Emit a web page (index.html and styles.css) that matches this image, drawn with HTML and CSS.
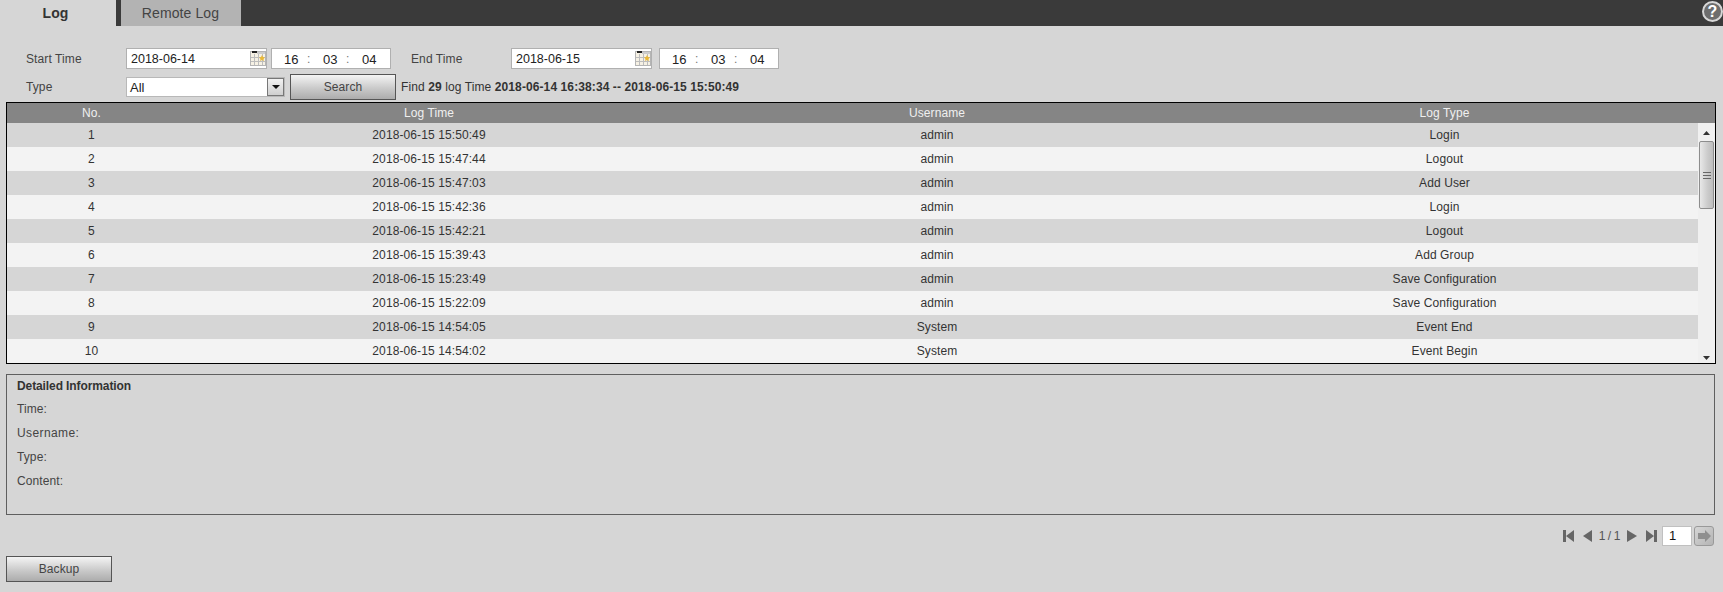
FILE: index.html
```html
<!DOCTYPE html>
<html lang="en">
<head>
<meta charset="utf-8">
<title>Log</title>
<link rel="stylesheet" href="styles.css">
</head>
<body>
<svg class="defs" width="0" height="0" aria-hidden="true">
  <symbol id="cal" viewBox="0 0 16 15">
    <rect x="0.5" y="0.5" width="15" height="14" fill="#f6f1e4" stroke="#b5b5b5"/>
    <rect x="2" y="0" width="5" height="2" fill="#222"/>
    <rect x="7" y="1" width="8" height="2" fill="#ccc"/>
    <path d="M1 6.5h14M1 10.5h14M4.5 3v11M8.5 3v11M12.5 3v11" stroke="#bdbdbd" fill="none"/>
    <path d="M12 4l1 2 2 .5-1.5 1.5.5 2-2-1-2 1 .5-2L9 6.5l2-.5z" fill="#e9b93a"/>
  </symbol>
</svg>
<header class="tabs">
  <div class="tab tab-active">Log</div>
  <div class="tab tab-other">Remote Log</div>
  <div class="help"><span>?</span></div>
</header>
<main class="page">
  <section class="filters">
    <div class="frow">
      <label class="lbl">Start Time</label>
      <div class="date"><span class="dtext">2018-06-14</span><svg class="calicon"><use href="#cal"/></svg></div>
      <div class="time"><span>16</span><i>:</i><span>03</span><i>:</i><span>04</span></div>
      <label class="lbl lbl-end">End Time</label>
      <div class="date"><span class="dtext">2018-06-15</span><svg class="calicon"><use href="#cal"/></svg></div>
      <div class="time time-end"><span>16</span><i>:</i><span>03</span><i>:</i><span>04</span></div>
    </div>
    <div class="frow frow2">
      <label class="lbl">Type</label>
      <div class="select">All<span class="selbtn"><b></b></span></div>
      <button class="btn btn-search">Search</button>
      <div class="find">Find <b>29</b> log Time <b>2018-06-14 16:38:34 -- 2018-06-15 15:50:49</b></div>
    </div>
  </section>
  <section class="table">
    <div class="thead">
      <div>No.</div><div>Log Time</div><div>Username</div><div>Log Type</div>
    </div>
    <div class="tbody">
      <div class="rows">
        <div class="row"><div>1</div><div>2018-06-15 15:50:49</div><div>admin</div><div>Login</div></div>
        <div class="row"><div>2</div><div>2018-06-15 15:47:44</div><div>admin</div><div>Logout</div></div>
        <div class="row"><div>3</div><div>2018-06-15 15:47:03</div><div>admin</div><div>Add User</div></div>
        <div class="row"><div>4</div><div>2018-06-15 15:42:36</div><div>admin</div><div>Login</div></div>
        <div class="row"><div>5</div><div>2018-06-15 15:42:21</div><div>admin</div><div>Logout</div></div>
        <div class="row"><div>6</div><div>2018-06-15 15:39:43</div><div>admin</div><div>Add Group</div></div>
        <div class="row"><div>7</div><div>2018-06-15 15:23:49</div><div>admin</div><div>Save Configuration</div></div>
        <div class="row"><div>8</div><div>2018-06-15 15:22:09</div><div>admin</div><div>Save Configuration</div></div>
        <div class="row"><div>9</div><div>2018-06-15 14:54:05</div><div>System</div><div>Event End</div></div>
        <div class="row"><div>10</div><div>2018-06-15 14:54:02</div><div>System</div><div>Event Begin</div></div>
      </div>
      <div class="scroll">
        <svg class="arrow" width="7" height="4" viewBox="0 0 7 4"><path d="M3.5 0L7 4H0z" fill="#333"/></svg>
        <div class="thumb"><span></span><span></span><span></span></div>
        <svg class="arrow arrow-down" width="7" height="4" viewBox="0 0 7 4"><path d="M0 0H7L3.5 4z" fill="#333"/></svg>
      </div>
    </div>
  </section>
  <section class="detail">
    <h3>Detailed Information</h3>
    <p>Time:</p>
    <p class="wide">Username:</p>
    <p>Type:</p>
    <p>Content:</p>
  </section>
  <nav class="pager">
    <svg width="11" height="12" viewBox="0 0 11 12"><path d="M0 0h3v12H0zM11 0v12L3 6z" fill="#666"/></svg>
    <svg class="pg-prev" width="9" height="12" viewBox="0 0 9 12"><path d="M9 0v12L0 6z" fill="#666"/></svg>
    <span class="pg-text">1 / 1</span>
    <svg class="pg-next" width="10" height="12" viewBox="0 0 10 12"><path d="M0 0v12l10-6z" fill="#666"/></svg>
    <svg class="pg-last" width="11" height="12" viewBox="0 0 11 12"><path d="M11 0H8v12h3zM0 0v12l8-6z" fill="#666"/></svg>
    <div class="pg-input">1</div>
    <div class="pg-go"><svg width="13" height="12" viewBox="0 0 13 12"><path d="M0 3h7V0l6 6-6 6V9H0z" fill="#8f8f8f"/></svg></div>
  </nav>
  <button class="btn btn-backup">Backup</button>
</main>
</body>
</html>
```
FILE: styles.css
```css
* { box-sizing: border-box; }
html, body { margin: 0; padding: 0; }
body {
  width: 1723px;
  height: 592px;
  overflow: hidden;
  background: #d6d6d6;
  color: #333;
  font-family: "Liberation Sans", Arial, sans-serif;
  font-size: 12px;
  letter-spacing: 0.1px;
}
.defs { display: block; height: 0; }
.tabs {
  display: flex;
  height: 26px;
  background: #3a3a3a;
  position: relative;
}
.tab { height: 26px; line-height: 26px; text-align: center; font-size: 14px; }
.tab-active { width: 116px; background: #d6d6d6; font-weight: bold; color: #333; padding-right: 5px; }
.tab-other { width: 120px; margin-left: 5px; background: #b3b3b3; color: #444; padding-right: 1px; }
.help {
  position: absolute;
  right: 0;
  top: 1px;
  width: 21px;
  height: 21px;
  border-radius: 50%;
  background: #6d6d6d;
  border: 2px solid #d6d6d6;
  color: #fff;
  font-weight: bold;
  font-size: 16px;
  line-height: 17px;
  text-align: center;
}
.page { padding: 22px 6px 0 6px; }
.filters { padding-left: 20px; }
.frow { display: flex; align-items: center; height: 21px; }
.frow2 { height: 26px; margin-top: 5px; }
.lbl { width: 100px; color: #444; }
.lbl-end { width: 100px; margin-left: 20px; }
.date {
  width: 141px;
  height: 21px;
  padding: 0 4px;
  background: #fff;
  border: 1px solid #b0b0b0;
  display: flex;
  align-items: center;
  justify-content: space-between;
  font-size: 12.5px;
  letter-spacing: 0;
  color: #222;
}
.dtext { padding-top: 1px; }
.calicon { width: 16px; height: 15px; margin-right: -4px; }
.time {
  width: 120px;
  height: 21px;
  margin-left: 4px;
  background: #fff;
  border: 1px solid #b0b0b0;
  display: flex;
  align-items: center;
  padding: 1px 0 0 12px;
  font-size: 13px;
  letter-spacing: 0;
  color: #222;
}
.time span { width: 15px; }
.time i { width: 3px; margin: 0 13px 0 8px; font-style: normal; color: #777; font-size: 12px; }
.time-end { margin-left: 7px; }
.select {
  width: 159px;
  height: 20px;
  background: #fff;
  border: 1px solid #b8b8b8;
  display: flex;
  align-items: center;
  justify-content: space-between;
  padding-left: 3px;
  font-size: 13px;
  letter-spacing: 0;
  color: #222;
}
.selbtn {
  width: 17px;
  height: 18px;
  background: linear-gradient(#f2f2f2, #cfcfcf);
  border: 1px solid #777;
  display: flex;
  align-items: center;
  justify-content: center;
}
.selbtn b {
  width: 0;
  height: 0;
  border-left: 4px solid transparent;
  border-right: 4px solid transparent;
  border-top: 4px solid #111;
}
.btn {
  font: inherit;
  letter-spacing: 0.1px;
  color: #444;
  padding: 0;
  border: 1px solid #555;
  background: linear-gradient(#f4f4f4, #cacaca 55%, #acacac);
  text-align: center;
}
.btn-search { width: 106px; height: 26px; margin-left: 5px; }
.find { margin-left: 5px; color: #333; }
.table {
  margin-top: 2px;
  width: 1710px;
  height: 262px;
  border: 1px solid #000;
}
.thead, .row {
  display: grid;
  grid-template-columns: 169px 506px 510px 505px;
  text-align: center;
}
.thead {
  height: 20px;
  line-height: 20px;
  background: #858585;
  color: #f0f0f0;
}
.tbody { display: flex; height: 240px; }
.rows { width: 1691px; overflow: hidden; }
.row { height: 24px; line-height: 24px; background: #f3f3f3; color: #333; }
.row:nth-child(odd) { background: #d6d6d6; }
.scroll {
  width: 17px;
  background: #f0f0f0;
  display: flex;
  flex-direction: column;
  align-items: center;
}
.arrow { margin-top: 8px; flex: none; }
.arrow-down { margin-top: auto; margin-bottom: 3px; }
.thumb {
  width: 15px;
  height: 68px;
  margin-top: 6px;
  border: 1px solid #8d8d8d;
  border-radius: 2px;
  background: linear-gradient(90deg, #e8e8e8, #cdcdcd 55%, #bdbdbd);
  display: flex;
  flex-direction: column;
  align-items: center;
  justify-content: center;
  gap: 2px;
}
.thumb span { width: 8px; height: 1px; background: #666; }
.detail {
  margin-top: 10px;
  width: 1709px;
  height: 141px;
  border: 1px solid #5f5f5f;
  padding: 4px 10px 0 10px;
  color: #444;
}
.detail h3 { margin: 0; font-size: 12px; line-height: 14px; color: #333; letter-spacing: -0.1px; }
.detail p { margin: 0; height: 24px; line-height: 24px; }
.detail h3 + p { margin-top: 4px; }
.detail .wide { letter-spacing: 0.4px; }
.pager {
  display: flex;
  justify-content: flex-end;
  align-items: center;
  width: 1708px;
  height: 20px;
  margin-top: 11px;
}
.pg-prev { margin-left: 9px; }
.pg-text { margin-left: 7px; color: #555; letter-spacing: -0.4px; }
.pg-next { margin-left: 7px; }
.pg-last { margin-left: 9px; }
.pg-input {
  width: 30px;
  height: 20px;
  margin-left: 5px;
  padding-left: 6px;
  background: #fff;
  border: 1px solid #c0c0c0;
  font-size: 13px;
  line-height: 18px;
  color: #111;
}
.pg-go {
  width: 20px;
  height: 20px;
  margin-left: 2px;
  border: 1px solid #999;
  border-radius: 3px;
  background: linear-gradient(135deg, #d6d6d6, #b4b4b4);
  display: flex;
  align-items: center;
  justify-content: center;
}
.btn-backup { display: block; width: 106px; height: 26px; margin-top: 10px; }
```
